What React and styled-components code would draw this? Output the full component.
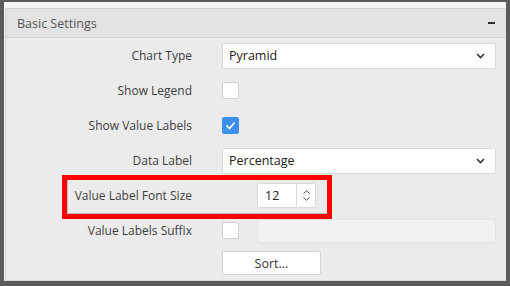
import React from "react";
import styled, { createGlobalStyle } from "styled-components";

const Global = createGlobalStyle`
  html, body {
    margin: 0;
    padding: 0;
    background: #5b5b5b;
  }
  body {
    font-family: "Open Sans", "Noto Sans", sans-serif;
    font-size: 12px;
    color: #3c3c3c;
  }
`;

const Frame = styled.div`
  width: 510px;
  height: 286px;
  box-sizing: border-box;
  padding: 2px 4px 5px 4px;
`;

const Inner = styled.div`
  height: 100%;
  background: #f4f4f4;
  padding: 6px 0 0 1px;
  box-sizing: border-box;
  display: flex;
  flex-direction: column;
`;

const Panel = styled.div`
  flex: 1;
  border-left: 1px solid #d3d3d3;
  border-top: 1px solid #d3d3d3;
  background: #ebebeb;
  display: flex;
  flex-direction: column;
`;

const Header = styled.div`
  height: 28px;
  background: #e3e3e3;
  border-bottom: 1px solid #d1d1d1;
  display: flex;
  align-items: center;
  justify-content: space-between;
  padding: 0 11px 0 11px;
  font-size: 12.5px;
  color: #555;
`;

const Collapse = styled.span`
  width: 7px;
  height: 2px;
  background: #2b2b2b;
`;

const Body = styled.div`
  position: relative;
  flex: 1;
  padding: 0 10px 0 0;
  border-bottom: 1px solid #d6d6d6;
`;

const Row = styled.div`
  display: grid;
  grid-template-columns: 186px 1fr;
  column-gap: 30px;
  align-items: center;
  height: ${(p) => p.$h || 35}px;
`;

const Label = styled.div`
  text-align: right;
  white-space: nowrap;
  color: #3e3e3e;
`;

const Control = styled.div`
  display: flex;
  align-items: center;
  gap: 18px;
`;

const Select = styled.div`
  height: 24px;
  background: #fff;
  border: 1px solid #d9d9d9;
  border-radius: 2px;
  display: flex;
  align-items: center;
  justify-content: space-between;
  padding: 0 10px 0 6px;
  color: #222;
  font-size: 12.5px;
`;

const Check = styled.div`
  width: 15px;
  height: 15px;
  border-radius: 2px;
  border: 1px solid ${(p) => (p.$on ? "#3d8ff0" : "#cfcfcf")};
  background: ${(p) => (p.$on ? "#3d8ff0" : "#fff")};
  display: flex;
  align-items: center;
  justify-content: center;
  flex: none;
`;

const NumberBox = styled.div`
  margin-left: 35px;
  width: 57px;
  height: 23px;
  background: #fff;
  border: 1px solid #dadada;
  border-radius: 2px;
  display: flex;
  align-items: stretch;
  color: #222;
  font-size: 12.5px;
`;

const NumberValue = styled.div`
  flex: 1;
  display: flex;
  align-items: center;
  padding-left: 7px;
`;

const Spinner = styled.div`
  width: 18px;
  border-left: 1px solid #dadada;
  display: flex;
  flex-direction: column;
  align-items: center;
  justify-content: center;
  gap: 3px;
`;

const TextInput = styled.div`
  flex: 1;
  height: 22px;
  background: #f1f1f1;
  border: 1px solid #e4e4e4;
  border-radius: 2px;
`;

const Button = styled.div`
  width: 97px;
  height: 22px;
  background: #fff;
  border: 1px solid #d3d3d3;
  border-radius: 2px;
  display: flex;
  align-items: center;
  justify-content: center;
  color: #333;
  font-size: 12.5px;
`;

const Highlight = styled.div`
  position: absolute;
  left: 56px;
  top: 137px;
  width: 260px;
  height: 34px;
  border: 5px solid #ff0000;
  box-shadow: inset 1px -1px 0 #b9b9b9;
  pointer-events: none;
`;

const Chevron = () => (
  <svg width="9" height="6" viewBox="0 0 9 6">
    <path d="M1 1l3.5 3.5L8 1" fill="none" stroke="#333" strokeWidth="1.6" />
  </svg>
);

const Tick = () => (
  <svg width="11" height="9" viewBox="0 0 11 9">
    <path d="M1.5 4.5l3 3L9.5 1.5" fill="none" stroke="#fff" strokeWidth="1.7" />
  </svg>
);

const Arrow = ({ up }) => (
  <svg width="7" height="4" viewBox="0 0 7 4">
    <path
      d={up ? "M0.5 3.5L3.5 0.8 6.5 3.5" : "M0.5 0.5L3.5 3.2 6.5 0.5"}
      fill="none"
      stroke="#444"
      strokeWidth="1"
    />
  </svg>
);

export default function App() {
  return (
    <Frame>
      <Global />
      <Inner>
        <Panel>
          <Header>
            <span>Basic Settings</span>
            <Collapse />
          </Header>
          <Body>
            <Row>
              <Label>Chart Type</Label>
              <Select>
                <span>Pyramid</span>
                <Chevron />
              </Select>
            </Row>
            <Row>
              <Label>Show Legend</Label>
              <Control>
                <Check />
              </Control>
            </Row>
            <Row>
              <Label>Show Value Labels</Label>
              <Control>
                <Check $on>
                  <Tick />
                </Check>
              </Control>
            </Row>
            <Row>
              <Label>Data Label</Label>
              <Select>
                <span>Percentage</span>
                <Chevron />
              </Select>
            </Row>
            <Row>
              <Label>Value Label Font Size</Label>
              <Control>
                <NumberBox>
                  <NumberValue>12</NumberValue>
                  <Spinner>
                    <Arrow up />
                    <Arrow />
                  </Spinner>
                </NumberBox>
              </Control>
            </Row>
            <Row>
              <Label>Value Labels Suffix</Label>
              <Control>
                <Check />
                <TextInput />
              </Control>
            </Row>
            <Row $h={30}>
              <div />
              <Control>
                <Button>Sort...</Button>
              </Control>
            </Row>
            <Highlight />
          </Body>
        </Panel>
      </Inner>
    </Frame>
  );
}
